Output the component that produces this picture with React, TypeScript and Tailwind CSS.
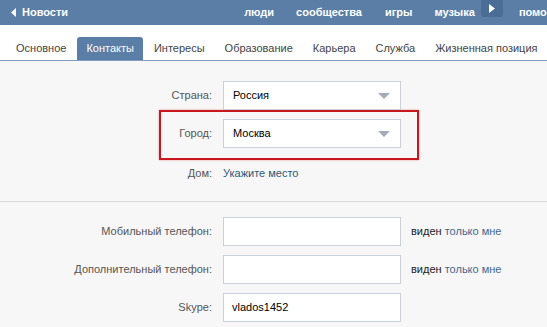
const tabs = ['Основное', 'Контакты', 'Интересы', 'Образование', 'Карьера', 'Служба', 'Жизненная позиция'];

function Caret() {
  return (
    <svg width="12" height="7" viewBox="0 0 12 7" className="absolute right-[10px] top-[11px]">
      <path d="M0 0 H12 L6 6 Z" fill="#a3acb8" />
    </svg>
  );
}

function Select({ value }: { value: string }) {
  return (
    <div className="relative w-[178px] h-[29px] bg-white border border-[#c9d0d8] pl-[9px] flex items-center text-black">
      {value}
      <Caret />
    </div>
  );
}

function Input({ value = '' }: { value?: string }) {
  return (
    <div className="w-[178px] h-[29px] bg-white border border-[#c9d0d8] pl-[8px] flex items-center text-black">
      {value}
    </div>
  );
}

function Visibility() {
  return (
    <div className="ml-[10px]">
      <span className="text-[#222]">виден</span> <span className="text-[#45688e]">только мне</span>
    </div>
  );
}

export default function App() {
  return (
    <div className="w-[547px] h-[327px] overflow-hidden bg-[#f7f7f7] text-[11px] font-['Liberation_Sans',sans-serif]">
      <div className="h-[25px] bg-[#5a7ea6] flex items-center text-white font-bold whitespace-nowrap overflow-hidden">
        <svg width="5" height="9" viewBox="0 0 5 9" className="ml-[11px] mr-[6px] shrink-0">
          <path d="M5 0 V9 L0 4.5 Z" fill="#fff" />
        </svg>
        <span className="shrink-0">Новости</span>
        <span className="ml-[176px] shrink-0">люди</span>
        <span className="ml-[22px] shrink-0">сообщества</span>
        <span className="ml-[23px] shrink-0">игры</span>
        <span className="ml-[22px] shrink-0">музыка</span>
        <div className="ml-[6px] self-start shrink-0 w-[22px] h-[17px] bg-[#4a6d95] rounded-b-[3px] flex items-center justify-center">
          <svg width="6" height="9" viewBox="0 0 6 9">
            <path d="M0 0 V9 L6 4.5 Z" fill="#fff" />
          </svg>
        </div>
        <span className="ml-[16px] shrink-0">помощь</span>
      </div>
      <div className="bg-white h-[36px] border-b border-[#7f9dbd] flex items-end pl-[6px] whitespace-nowrap">
        {tabs.map((t) =>
          t === 'Контакты' ? (
            <div key={t} className="h-[23px] px-[9px] bg-[#5a7ea6] text-white rounded-t-[3px] flex items-center mx-[1px]">
              {t}
            </div>
          ) : (
            <div key={t} className="h-[23px] px-[10px] text-[#444] flex items-center">
              {t}
            </div>
          )
        )}
      </div>

      <div className="pt-[20px] flex flex-col">
        <div className="flex items-center">
          <div className="w-[212px] text-right text-[#555]">Страна:</div>
          <div className="ml-[11px]">
            <Select value="Россия" />
          </div>
        </div>
        <div className="ml-[159px] w-[260px] h-[50px] border-2 border-[#c9171e] shadow-[0_0_2px_rgba(200,23,30,0.4)] flex items-start pt-[7px]">
          <div className="w-[51px] text-right text-[#555] h-[29px] flex items-center justify-end">Город:</div>
          <div className="ml-[11px]">
            <Select value="Москва" />
          </div>
        </div>
        <div className="flex items-center mt-[5px]">
          <div className="w-[212px] text-right text-[#555]">Дом:</div>
          <div className="ml-[11px] text-[#2b587a]">Укажите место</div>
        </div>
      </div>

      <div className="mt-[19px] border-t border-[#dcdcdc] pt-[15px] flex flex-col gap-[9px]">
        <div className="flex items-center">
          <div className="w-[212px] text-right text-[#555]">Мобильный телефон:</div>
          <div className="ml-[11px]"><Input /></div>
          <Visibility />
        </div>
        <div className="flex items-center">
          <div className="w-[212px] text-right text-[#555]">Дополнительный телефон:</div>
          <div className="ml-[11px]"><Input /></div>
          <Visibility />
        </div>
        <div className="flex items-center">
          <div className="w-[212px] text-right text-[#555]">Skype:</div>
          <div className="ml-[11px]"><Input value="vlados1452" /></div>
        </div>
      </div>
    </div>
  );
}
